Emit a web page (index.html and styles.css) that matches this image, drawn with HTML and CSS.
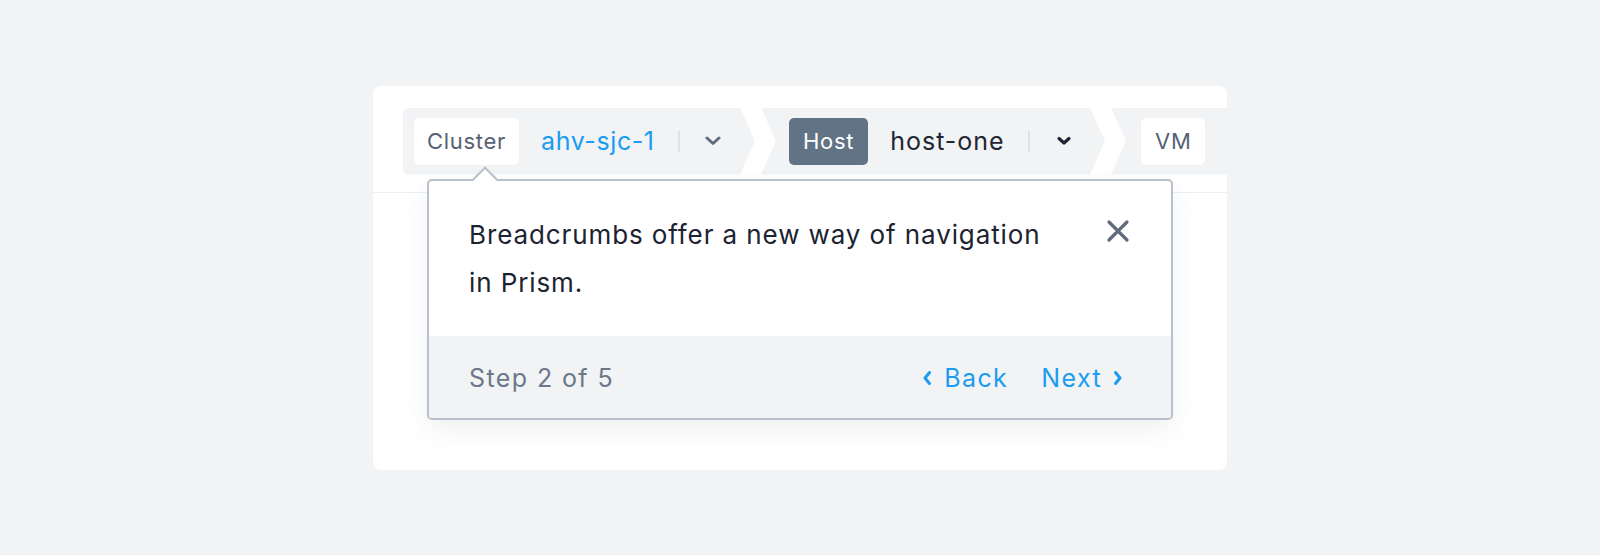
FILE: index.html
```html
<!DOCTYPE html>
<html lang="en">
<head>
<meta charset="utf-8">
<title>Breadcrumbs tour</title>
<link rel="stylesheet" href="styles.css">
</head>
<body>
<div class="stage">
  <div class="card">
    <div class="card-header">
      <nav class="crumbs">
        <div class="crumb crumb-first">
          <span class="chip">Cluster</span>
          <span class="crumb-value link">ahv-sjc-1</span>
          <span class="divider"></span>
          <svg class="caret caret-muted" width="16" height="10" viewBox="0 0 16 10"><path d="M2 2l6 5.5L14 2" fill="none" stroke="currentColor" stroke-width="3" stroke-linecap="round" stroke-linejoin="round"/></svg>
        </div>
        <div class="crumb crumb-mid">
          <span class="chip chip-active">Host</span>
          <span class="crumb-value">host-one</span>
          <span class="divider"></span>
          <svg class="caret" width="16" height="10" viewBox="0 0 16 10"><path d="M3 2.5l5 4.5 5-4.5" fill="none" stroke="currentColor" stroke-width="3.2" stroke-linecap="round" stroke-linejoin="round"/></svg>
        </div>
        <div class="crumb crumb-last">
          <span class="chip">VM</span>
        </div>
      </nav>
    </div>

    <div class="popover">
      <span class="popover-arrow"></span>
      <div class="popover-body">
        <p class="popover-text">Breadcrumbs offer a new way of navigation<br>in Prism.</p>
        <svg class="close" width="24" height="24" viewBox="0 0 24 24"><path d="M3 3l18 18M21 3L3 21" fill="none" stroke="currentColor" stroke-width="3.2" stroke-linecap="round"/></svg>
      </div>
      <div class="popover-footer">
        <span class="step">Step 2 of 5</span>
        <div class="nav-buttons">
          <span class="nav-btn">
            <svg width="10" height="16" viewBox="0 0 10 16"><path d="M7.5 2.5L3 8l4.5 5.5" fill="none" stroke="currentColor" stroke-width="3" stroke-linecap="round" stroke-linejoin="round"/></svg>
            Back
          </span>
          <span class="nav-btn">
            Next
            <svg width="10" height="16" viewBox="0 0 10 16"><path d="M2.5 2.5L7 8l-4.5 5.5" fill="none" stroke="currentColor" stroke-width="3" stroke-linecap="round" stroke-linejoin="round"/></svg>
          </span>
        </div>
      </div>
    </div>
  </div>
</div>
</body>
</html>
```

FILE: styles.css
```css
* { box-sizing: border-box; }

html, body {
  margin: 0;
  padding: 0;
}

body {
  background: #f2f3f5;
  font-family: "Inter", "Liberation Sans", sans-serif;
  color: #1f2633;
}

.stage {
  width: 1600px;
  height: 555px;
  display: flex;
  align-items: center;
  justify-content: center;
}

.card {
  position: relative;
  width: 854px;
  height: 384px;
  background: #ffffff;
  border-radius: 8px;
  overflow: hidden;
}

.card-header {
  height: 107px;
  padding: 22px 0 0 30px;
  border-bottom: 1px solid #eceef1;
}

.crumbs {
  display: flex;
  height: 67px;
  gap: 6px;
}

.crumb {
  display: flex;
  align-items: center;
  background: #f2f3f5;
  height: 67px;
  flex: none;
}

.crumb-first {
  width: 352px;
  padding-left: 11px;
  border-radius: 6px 0 0 6px;
  clip-path: polygon(0 0, calc(100% - 15px) 0, 100% 50%, calc(100% - 15px) 100%, 0 100%);
}

.crumb-mid {
  width: 344px;
  padding-left: 28px;
  clip-path: polygon(0 0, calc(100% - 15px) 0, 100% 50%, calc(100% - 15px) 100%, 0 100%, 15px 50%);
}

.crumb-last {
  flex: 1;
  padding-left: 30px;
  clip-path: polygon(0 0, 100% 0, 100% 100%, 0 100%, 15px 50%);
}

.chip {
  display: flex;
  align-items: center;
  justify-content: center;
  height: 47px;
  padding: 0 13px;
  background: #ffffff;
  border-radius: 5px;
  font-size: 22px;
  letter-spacing: 0.7px;
  color: #566274;
}

.chip-active {
  background: #627386;
  color: #ffffff;
  padding: 0 14px;
}

.crumb-last .chip {
  padding: 0 14px;
}

.crumb-value {
  margin-left: 22px;
  font-size: 25px;
  letter-spacing: 1px;
  color: #1f2633;
}

.crumb-value.link {
  color: #1b9cf0;
  letter-spacing: 0.6px;
}

.divider {
  width: 2px;
  height: 21px;
  margin-left: 23px;
  background: #dde1e7;
}

.caret {
  margin-left: 26px;
  color: #1f2633;
}

.caret-muted {
  margin-left: 25px;
  color: #5f6d80;
}

.popover {
  position: absolute;
  left: 54px;
  top: 93px;
  width: 746px;
  height: 241px;
  border: 2px solid #b8c0cb;
  border-radius: 5px;
  background: #ffffff;
  box-shadow: 0 10px 24px rgba(40, 50, 70, 0.07);
  display: flex;
  flex-direction: column;
}

.popover-arrow {
  position: absolute;
  left: 47px;
  top: -11px;
  width: 18px;
  height: 18px;
  background: #ffffff;
  border-top: 2px solid #b8c0cb;
  border-left: 2px solid #b8c0cb;
  transform: rotate(45deg);
}

.popover-body {
  display: flex;
  justify-content: space-between;
  align-items: flex-start;
  height: 155px;
  padding: 30px 41px 0 40px;
  border-radius: 4px 4px 0 0;
}

.popover-text {
  margin: 0;
  font-size: 26px;
  line-height: 48px;
  letter-spacing: 0.9px;
  color: #1c2330;
}

.close {
  margin-top: 8px;
  color: #5f6b7c;
}

.popover-footer {
  flex: 1;
  display: flex;
  align-items: center;
  justify-content: space-between;
  padding: 3px 48px 0 40px;
  background: #f2f3f5;
  border-radius: 0 0 3px 3px;
  font-size: 25px;
  letter-spacing: 1.4px;
}

.step {
  color: #6b788a;
}

.nav-buttons {
  display: flex;
  gap: 33px;
}

.nav-btn {
  display: flex;
  align-items: center;
  gap: 11px;
  color: #1b9cf0;
}

.nav-btn:first-child {
  gap: 12px;
}
```
